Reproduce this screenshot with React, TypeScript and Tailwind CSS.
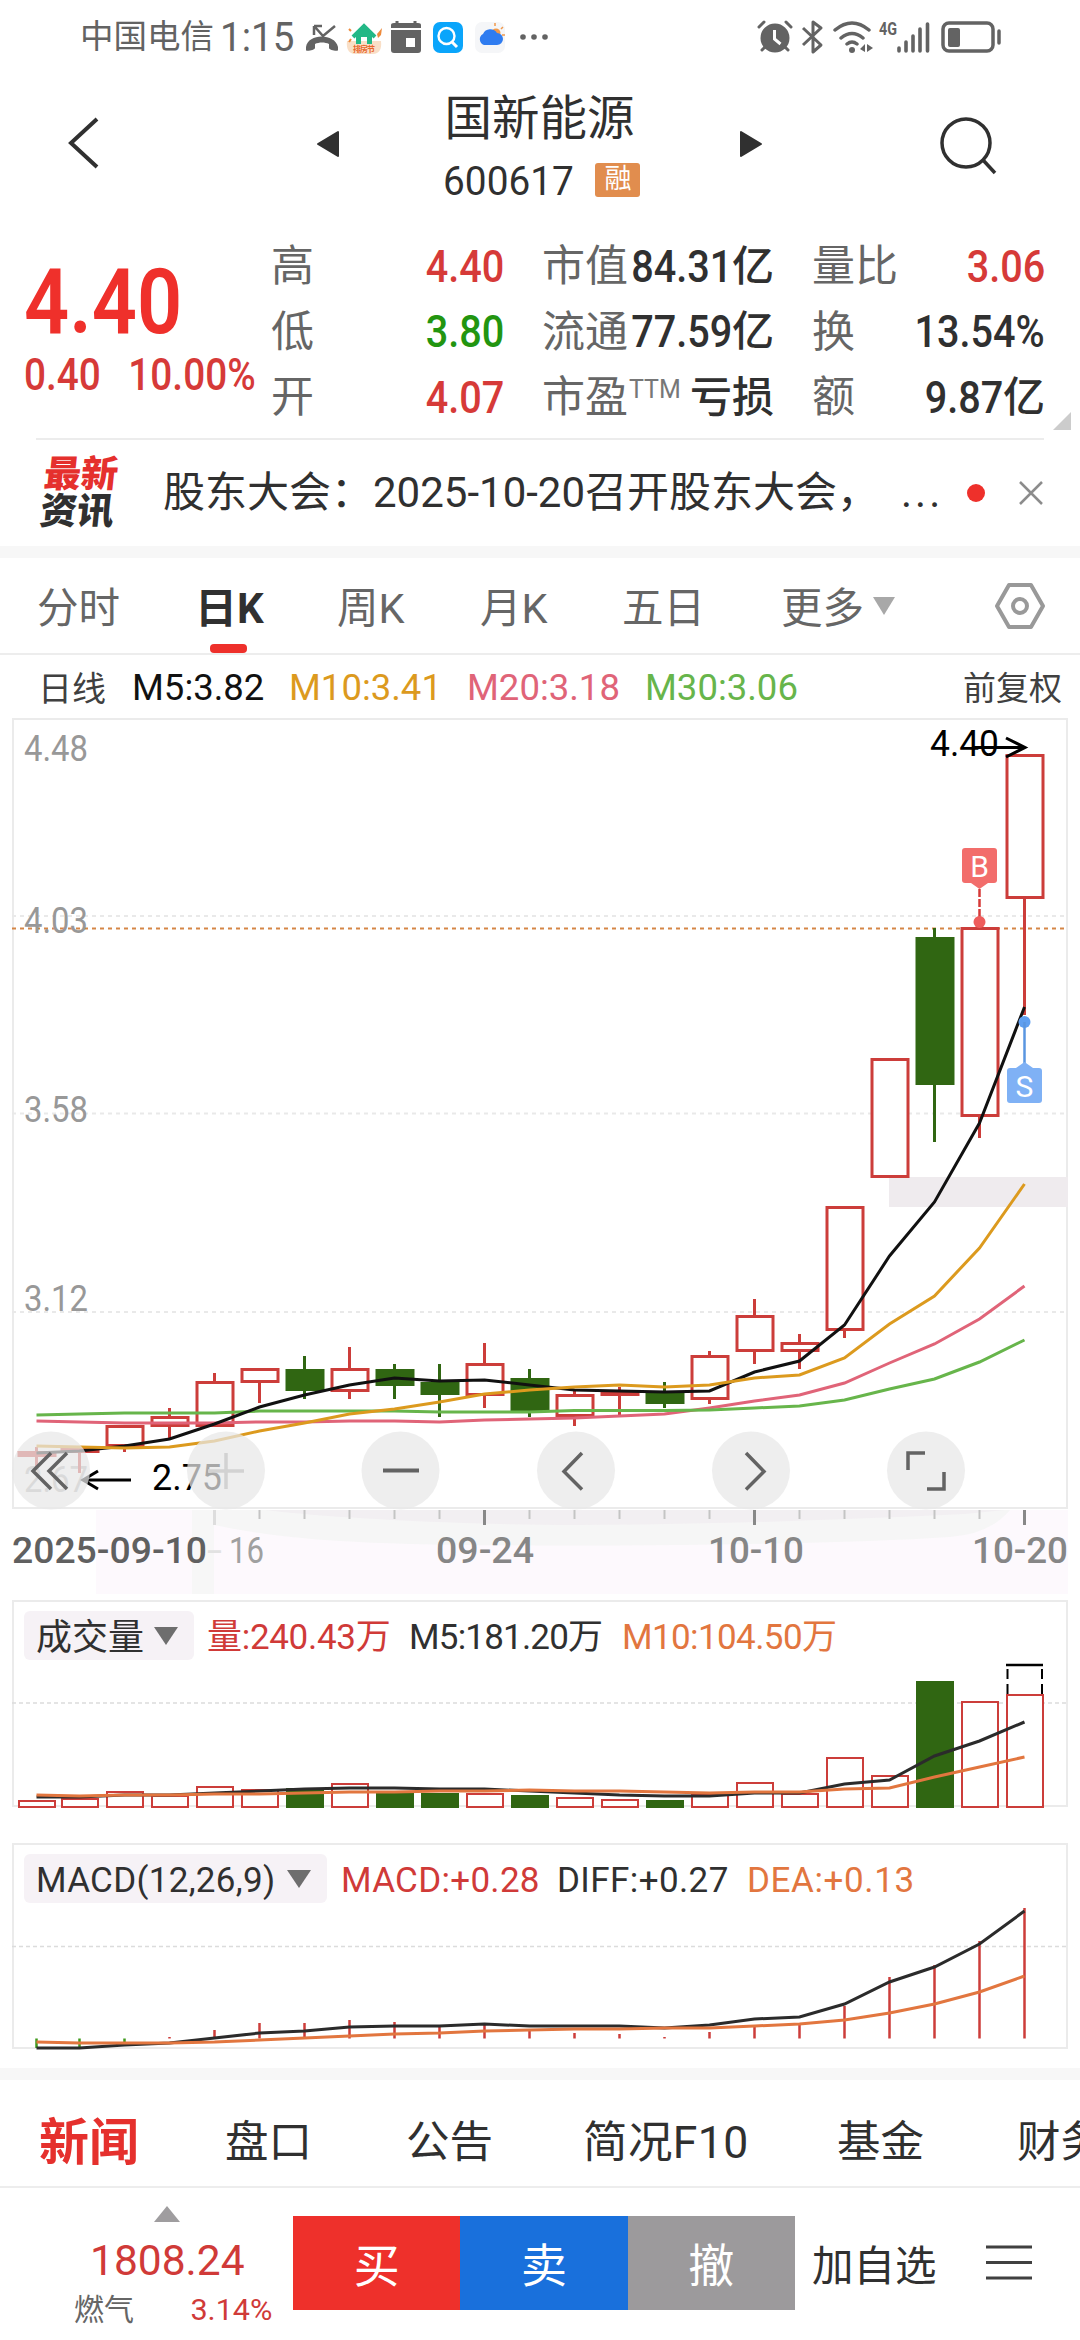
import React from 'react';

const RED = '#cc3d3a';
const GREEN = '#306612';

// [body top, body bottom, high, low, falling]
type Candle = [number, number, number, number, boolean?];

const candles: Candle[] = [
  [1451, 1457, 1447, 1467],
  [1448, 1453, 1447, 1473],
  [1425, 1447, 1425, 1452],
  [1416, 1427, 1408, 1438],
  [1381, 1427, 1373, 1427],
  [1368, 1383, 1368, 1403],
  [1369, 1391, 1356, 1399, true],
  [1368, 1392, 1347, 1399],
  [1369, 1386, 1364, 1399, true],
  [1382, 1395, 1364, 1417, true],
  [1363, 1396, 1343, 1408],
  [1378, 1411, 1369, 1417, true],
  [1394, 1417, 1389, 1426],
  [1392, 1396, 1387, 1415],
  [1393, 1404, 1382, 1408, true],
  [1355, 1400, 1351, 1404],
  [1315, 1352, 1299, 1364],
  [1342, 1352, 1334, 1369],
  [1206, 1331, 1206, 1338],
  [1058, 1178, 1058, 1178],
  [937, 1085, 928, 1142, true],
  [927, 1117, 927, 1138],
  [754, 899, 754, 1015],
];

const averages = [
  { color: '#e06478', data: [1421, 1422, 1423, 1423, 1423, 1422, 1422, 1421, 1421, 1422, 1420, 1419, 1418, 1416, 1414, 1408, 1401, 1395, 1383, 1363, 1344, 1319, 1286] },
  { color: '#67b54b', data: [1415, 1414, 1413, 1413, 1413, 1411, 1411, 1411, 1411, 1412, 1412, 1412, 1410.5, 1410.5, 1410.5, 1410, 1408, 1406, 1400, 1389, 1379, 1362, 1340] },
  { color: '#111111', data: [1453, 1451, 1446, 1439, 1424, 1407, 1395, 1385, 1378, 1381, 1380, 1385, 1390, 1391, 1392, 1391, 1372, 1361, 1325, 1256, 1202, 1123, 1007] },
  { color: '#dc9a1e', data: [1446, 1447, 1448, 1447, 1441, 1431, 1423, 1414, 1409, 1402, 1394, 1390, 1387, 1385, 1387, 1385, 1378, 1375, 1358, 1324, 1296, 1248, 1184] },
];

const volumes = [1800, 1798, 1791, 1795, 1786, 1789, 1788, 1783, 1793, 1793, 1793, 1795, 1797, 1799, 1800, 1794, 1782, 1793, 1757, 1775, 1681, 1701, 1694];
const volumeM5 = [1797, 1797, 1795, 1795, 1793, 1791, 1789, 1788, 1788, 1789, 1789, 1791, 1793, 1795, 1796, 1796, 1793, 1793, 1784, 1780, 1756, 1741, 1722];
const volumeM10 = [1795, 1796, 1795, 1795, 1794, 1794, 1793, 1792, 1792, 1791, 1791, 1790, 1791, 1791, 1792, 1793, 1792, 1792, 1789, 1788, 1777, 1767, 1757];

const macd = [2048, 2048, 2042, 2037, 2030, 2023, 2023, 2020, 2022, 2027, 2025, 2031, 2033, 2034, 2037, 2032, 2027, 2025, 2006, 1977, 1965, 1941, 1908];
const diff = [2048, 2048, 2045, 2043, 2038, 2033, 2031, 2027, 2026, 2026, 2024, 2026, 2026, 2026, 2028, 2025, 2019, 2017, 2004, 1982, 1967, 1944, 1911];
const dea = [2042, 2043, 2043, 2043, 2042, 2040, 2038, 2036, 2034, 2033, 2031, 2030, 2029, 2029, 2028, 2028, 2026, 2024, 2020, 2013, 2004, 1992, 1976];

const xAt = (i: number) => (i === 0 ? 36.5 : 1024.5 - 45 * (22 - i));

const Line = ({ data, color }: { data: number[]; color: string }) => (
  <polyline points={data.map((y, i) => `${xAt(i)},${y}`).join(' ')} fill="none" stroke={color} strokeWidth="3" />
);

type LabelProps = { x: number; y: number; w: number; size?: number; fill?: string; weight?: number; children: string };

const Label = ({ x, y, w, size = 36, fill = '#989898', weight = 400, children }: LabelProps) => (
  <text x={x} y={y} textLength={w} lengthAdjust="spacingAndGlyphs" fontSize={size} fontWeight={weight} fill={fill}>
    {children}
  </text>
);

const StatusBar = () => (
  <div className="flex h-[72px] items-center pt-[2px] pl-[80px] text-[#636363]">
    <span className="w-[140px] whitespace-nowrap text-[33.5px]">中国电信</span>
    <span className="w-[85px] origin-left scale-x-[0.94] whitespace-nowrap text-[41px]">1:15</span>
    <svg width="244" height="44" viewBox="305 14 244 44">
      {/* missed call */}
      <path d="M314 25v9M314 25h8M315 26l8 9 12-10" fill="none" stroke="#636363" strokeWidth="2.500" />
      <path d="M306 46c2-14 29-14 32 0v3c0 2-9 0-9-2v-4c-4-2-10-2-14 0v4c0 2-9 4-9 2z" fill="#636363" />
      {/* housing app */}
      <path d="M347 40h34c1 8-2 13-8 13h-18c-6 0-9-5-8-13z" fill="#f9dfc7" />
      <path d="M353 36l11-11 11 11" fill="none" stroke="#23b886" strokeWidth="4" />
      <path d="M356 34l8-7 8 7v9h-5v-7h-6v7h-5z" fill="#23b886" />
      <text x="353" y="51" fontSize="8" fontWeight="700" fill="#e8672c" textLength="22">排房节</text>
      <path d="M377 33l5-6-1 7-3 3z" fill="#ee8a3b" />
      <path d="M349 28l2 2M349 41l2-3" stroke="#ee8a3b" strokeWidth="2" />
      {/* calendar */}
      <path d="M391 29h30v20q0 3-3 3h-24q-3 0-3-3z" fill="#636363" />
      <path d="M391 27v-3q0-2 3-2h24q3 0 3 2v3z" fill="#636363" />
      <path d="M397 20v4M415 20v4" stroke="#636363" strokeWidth="3" />
      <rect x="406" y="37" width="9" height="9" fill="#fff" />
      {/* search app */}
      <rect x="433" y="21" width="30" height="31" rx="7" fill="#0aa5fb" />
      <circle cx="446.500" cy="35" r="8" fill="none" stroke="#fff" strokeWidth="2.400" />
      <path d="M452 41l5 5" stroke="#fff" strokeWidth="3" />
      {/* weather */}
      <rect x="475" y="21" width="30" height="31" rx="7" fill="#f5f6f8" />
      <circle cx="496" cy="32" r="4.500" fill="#f2994a" />
      <path d="M495 25v-3M501 28l2-2M502 34h3" stroke="#f2994a" strokeWidth="1.500" />
      <path d="M484 44a6 6 0 0 1-1-11 8 8 0 0 1 14-1 6 6 0 0 1 0 12z" fill="#2f7cf0" />
      <circle cx="523" cy="36" r="2.800" fill="#636363" />
      <circle cx="534" cy="36" r="2.800" fill="#636363" />
      <circle cx="545" cy="36" r="2.800" fill="#636363" />
    </svg>
    <span className="flex-1" />
    <svg className="mr-[74px]" width="252" height="44" viewBox="754 14 252 44">
      {/* alarm */}
      <circle cx="775" cy="37" r="14.500" fill="#636363" />
      <path d="M759 26l5-5M791 26l-5-5M762 49l4-4M788 49l-4-4" stroke="#636363" strokeWidth="3" strokeLinecap="round" />
      <path d="M774.500 29v9l6 5" fill="none" stroke="#fff" strokeWidth="3" />
      {/* bluetooth */}
      <path d="M803 27l18 17-8 7V21l8 6-18 17" fill="none" stroke="#636363" strokeWidth="3" strokeLinejoin="round" />
      {/* wifi */}
      <path d="M835 29q17-14 34 0M841 37q11-9 22 0M847 43q5-4 10 0" fill="none" stroke="#636363" strokeWidth="3.500" strokeLinecap="round" />
      <circle cx="852" cy="49" r="3" fill="#636363" />
      <path d="M865 43v8l-5-3zM867 43l6 4-6 4z" fill="#636363" />
      <Label x={879} y={34} w={18} size={19} weight={700} fill="#636363">4G</Label>
      <path d="M899 47v3M906 41v9M913 35v15M920 28v22M927.500 23v27" stroke="#636363" strokeWidth="3.600" strokeLinecap="round" />
      <rect x="943" y="22" width="50" height="28" rx="6" fill="none" stroke="#636363" strokeWidth="3.500" />
      <rect x="948" y="27" width="12" height="19" rx="2" fill="#636363" />
      <path d="M999 30v12" stroke="#636363" strokeWidth="3.500" strokeLinecap="round" />
    </svg>
  </div>
);

const Header = () => (
  <header className="flex h-[156px] items-center text-[#303030]">
    <svg className="mt-[-14px] ml-[66px]" width="36" height="56" viewBox="0 0 36 56">
      <path d="M31 4L5 28l26 24" fill="none" stroke="#303030" strokeWidth="4" />
    </svg>
    <svg className="mt-[-12px] ml-[214px]" width="24" height="30" viewBox="0 0 24 30">
      <path d="M22 3v24L2 15z" fill="#303030" stroke="#303030" strokeLinejoin="round" strokeWidth="2" />
    </svg>
    <div className="mt-[-10px] flex w-[399px] flex-col items-center">
      <h1 className="text-[47.500px] leading-[54px]">国新能源</h1>
      <div className="mt-[19px] flex items-center gap-[22px]">
        <span className="origin-right scale-x-[0.97] text-[40px] leading-[34px]">600617</span>
        <span className="mt-[-4px] flex h-[34px] w-[45px] items-center justify-center rounded-[3px] bg-[#e18d4e] text-[27px] text-white">
          融
        </span>
      </div>
    </div>
    <svg className="mt-[-12px]" width="24" height="30" viewBox="0 0 24 30">
      <path d="M2 3v24l20-12z" fill="#303030" stroke="#303030" strokeLinejoin="round" strokeWidth="2" />
    </svg>
    <svg className="mt-[-8px] ml-[175px]" width="64" height="62" viewBox="0 0 64 62">
      <circle cx="28" cy="28" r="24" fill="none" stroke="#303030" strokeWidth="3.500" />
      <path d="M45 45l12 13" stroke="#303030" strokeWidth="3.500" />
    </svg>
  </header>
);

type Stat = { label: string; value: string; unit?: string; sup?: string; color: string };

const stats: Stat[][] = [
  [
    { label: '高', value: '4.40', color: 'text-[#d63a38]' },
    { label: '低', value: '3.80', color: 'text-[#229510]' },
    { label: '开', value: '4.07', color: 'text-[#d63a38]' },
  ],
  [
    { label: '市值', value: '84.31', unit: '亿', color: 'text-[#303030]' },
    { label: '流通', value: '77.59', unit: '亿', color: 'text-[#303030]' },
    { label: '市盈', sup: 'TTM', value: '', unit: '亏损', color: 'text-[#303030]' },
  ],
  [
    { label: '量比', value: '3.06', color: 'text-[#d63a38]' },
    { label: '换', value: '13.54%', color: 'text-[#303030]' },
    { label: '额', value: '9.87', unit: '亿', color: 'text-[#303030]' },
  ],
];

const StatRow = ({ label, value, unit, sup, color }: Stat) => (
  <div className="flex h-[65.500px] items-center text-[43px] whitespace-nowrap">
    <span className="w-0 text-[#666666]">{label}</span>
    {sup && <sup className="top-[-8px] ml-[87px] text-[25px] leading-none text-[#777777]">{sup}</sup>}
    <span className={`ml-auto flex items-center font-medium ${color}`}>
      <span className="origin-right scale-x-[0.9] text-[44px]">{value}</span>
      <span className="text-[42px]">{unit}</span>
    </span>
  </div>
);

const Quote = () => (
  <section className="relative flex h-[210px] pl-[24px]">
    <div className="w-[247px] pt-[36px] text-[#d63a38]">
      <div className="origin-left scale-x-[0.88] text-[90px] leading-[78px] font-semibold text-[#ef302b]">4.40</div>
      <div className="mt-[12px] flex origin-left scale-x-[0.89] gap-[31px] text-[43.500px] leading-[44px] font-medium whitespace-nowrap">
        <span>0.40</span>
        <span>10.00%</span>
      </div>
    </div>
    <div className="grid grid-cols-[233px_232px_233px] gap-x-[38px] pt-[6px]">
      {stats.map((col, i) => (
        <div key={i}>
          {col.map((s) => (
            <StatRow key={s.label} {...s} />
          ))}
        </div>
      ))}
    </div>
    <svg className="absolute right-[9px] bottom-[8px]" width="18" height="18">
      <path d="M18 0v18H0z" fill="#cccccc" />
    </svg>
  </section>
);

const NewsTicker = () => (
  <section className="mx-[36px] flex h-[108px] items-center border-t-2 border-[#ececec] text-[#303030]">
    <div className="ml-[6px] flex w-[121px] -skew-x-6 flex-col text-[37px] leading-[37px] font-black">
      <span className="text-[#e5302d]">最新</span>
      <span>资讯</span>
    </div>
    <span className="w-[738px] text-[42px] whitespace-nowrap">股东大会：2025-10-20召开股东大会，</span>
    <span className="w-[66px] text-[42px] tracking-[3px]">...</span>
    <span className="h-[18px] w-[18px] shrink-0 rounded-full bg-[#ee302b]" />
    <svg className="ml-auto" width="26" height="26" viewBox="0 0 26 26">
      <path d="M2 2l22 22M24 2L2 24" stroke="#8c8c8c" strokeWidth="2.500" />
    </svg>
  </section>
);

const periods = [
  { name: '分时', width: 'w-[158px]' },
  { name: '日K', width: 'w-[142px]' },
  { name: '周K', width: 'w-[143px]' },
  { name: '月K', width: 'w-[142px]' },
  { name: '五日', width: 'w-[159px]' },
  { name: '更多', width: 'w-[91px]' },
];

const PeriodTabs = () => (
  <nav className="flex h-[97px] items-center border-b-2 border-[#ededed] pl-[37px] text-[41.500px] text-[#666666]">
    {periods.map((p) => (
      <div key={p.name} className={`relative flex h-full items-center pt-[6px] whitespace-nowrap ${p.width}`}>
        <span className={p.name === '日K' ? 'text-[42px] font-bold text-[#303030]' : ''}>{p.name}</span>
        {p.name === '日K' && <span className="absolute bottom-0 left-[15px] h-[9px] w-[37px] rounded-[4px] bg-[#ee302b]" />}
      </div>
    ))}
    <svg width="24" height="20" viewBox="0 0 24 20">
      <path d="M1 1h22L12 19z" fill="#a8a8a8" />
    </svg>
    <svg className="ml-[98px]" width="52" height="50" viewBox="0 0 52 50">
      <path d="M15 4h22l12 21-12 21H15L3 25z" fill="none" stroke="#999999" strokeWidth="4" strokeLinejoin="round" />
      <circle cx="26" cy="25" r="7" fill="none" stroke="#999999" strokeWidth="4" />
    </svg>
  </nav>
);

const AverageRow = () => (
  <div className="flex h-[63px] items-center pt-[4px] pl-[38px] text-[36.500px] whitespace-nowrap">
    <span className="w-[94px] text-[34px] text-[#404040]">日线</span>
    <span className="w-[157px] text-[#111111]">M5:3.82</span>
    <span className="w-[178px] text-[#dc9a1e]">M10:3.41</span>
    <span className="w-[178px] text-[#e06478]">M20:3.18</span>
    <span className="text-[#67b54b]">M30:3.06</span>
    <span className="mr-[18px] ml-auto text-[33px] text-[#404040]">前复权</span>
  </div>
);

const CHART_BUTTONS = [51, 226, 400.5, 576, 751, 926];

const CandleChart = () => (
  <svg className="block" width="1080" height="882" viewBox="0 718 1080 882">
    <rect x="13" y="719" width="1054" height="789" fill="none" stroke="#ebebeb" strokeWidth="2" />
    <rect x="96" y="1510" width="972" height="84" fill="#fdf9fd" />
    <rect x="192" y="1510" width="22" height="84" fill="#f7f7f7" />
    <path d="M214 1510h796q-20 24-60 27-90 6-270 8-250 2-340-4-70-4-126-16z" fill="#f6f6f6" />
    <path d="M265 1510h740l-40 4q-300 14-465 10-150-4-235-14z" fill="#f2eff2" />
    <path d="M12 916H1068M12 1113.500H1068M12 1312H1068" stroke="#e9e9e9" strokeWidth="2" strokeDasharray="4 4" />
    <rect x="889" y="1177" width="179" height="30" fill="#efebee" />
    <path d="M12 928.500H1068" stroke="#d58646" strokeWidth="2" strokeDasharray="4 4" />

    <Label x={24} y={761} w={64}>4.48</Label>
    <Label x={24} y={933} w={64}>4.03</Label>
    <Label x={24} y={1122} w={64}>3.58</Label>
    <Label x={24} y={1311} w={64}>3.12</Label>
    <Label x={24} y={1492} w={64} fill="#b8b8b8">2.67</Label>

    {candles.map(([top, bottom, high, low, falling], i) => {
      const x = xAt(i);
      const color = falling ? GREEN : RED;
      return (
        <g key={i} stroke={color} strokeWidth="3">
          <path d={`M${x} ${high}V${top}M${x} ${bottom}V${low}`} />
          <rect x={x - 17.5} y={top + 1.5} width="36" height={Math.max(bottom - top - 3, 1)} fill={falling ? GREEN : '#ffffff'} />
        </g>
      );
    })}
    {averages.map((a) => (
      <Line key={a.color} {...a} />
    ))}

    {/* highest / lowest price markers */}
    <Label x={930} y={756} w={69} size={37} fill="#000000">4.40</Label>
    <path d="M972 747.500h52M1006 738l19 9.500-19 9.500" fill="none" stroke="#000" strokeWidth="3" />
    <Label x={152} y={1490} w={70} size={37} fill="#000000">2.75</Label>
    <path d="M131 1480H84M98 1471l-15 9 15 9" fill="none" stroke="#000" strokeWidth="3" />

    {/* buy / sell flags */}
    <rect x="962" y="848" width="35" height="35" rx="3" fill="#f26d6b" />
    <path d="M971 883h17l-8.500 6z" fill="#f26d6b" />
    <path d="M979.500 889v30" stroke="#d63a38" strokeWidth="2.500" strokeDasharray="8 2" />
    <circle cx="979.500" cy="922" r="6" fill="#ee5c5b" />
    <text x="979.500" y="877" fontSize="30" fill="#fff" textAnchor="middle">B</text>
    <circle cx="1024.500" cy="1022" r="6" fill="#5f9ff0" />
    <path d="M1024.500 1022v42" stroke="#5a96e0" strokeWidth="2.500" />
    <path d="M1016 1068h17l-8.500-6z" fill="#7fb1f5" />
    <rect x="1007" y="1068" width="35" height="35" rx="3" fill="#7fb1f5" />
    <text x="1024.500" y="1097" fontSize="30" fill="#fff" textAnchor="middle">S</text>

    {CHART_BUTTONS.map((cx) => (
      <circle key={cx} cx={cx} cy="1470.500" r="39" fill="#e8e8e8" fillOpacity="0.72" />
    ))}
    <g fill="none" stroke="#636363" strokeWidth="3.500">
      <path d="M51 1453l-18 18 18 18M67 1453l-18 18 18 18" />
      <path d="M226 1453v36M208 1471h36" stroke="#d2d2d2" />
      <path d="M383 1470.500h36" strokeWidth="4" />
      <path d="M582 1453l-18 18.500 18 18" />
      <path d="M746 1453l18 18.500-18 18" />
      <path d="M908 1470v-17h17M944 1472v17h-17" />
    </g>

    {candles.map((_, i) => {
      if (i < 4) return null;
      const major = (i - 4) % 6 === 0;
      return (
        <path
          key={i}
          d={`M${xAt(i)} 1510v${major ? 15 : 9}`}
          stroke={i === 4 ? '#dddddd' : major ? '#888888' : '#c4c4c4'}
          strokeWidth={major ? 3 : 2}
        />
      );
    })}
    <Label x={12} y={1563} w={195} weight={500} fill="#606060">2025-09-10</Label>
    <Label x={207} y={1563} w={15} fill="#e2e2e2">-</Label>
    <Label x={229} y={1563} w={35} fill="#a0a0a0">16</Label>
    <Label x={436} y={1563} w={98} weight={500} fill="#868686">09-24</Label>
    <Label x={708} y={1563} w={96} weight={500} fill="#868686">10-10</Label>
    <Label x={972} y={1563} w={96} weight={500} fill="#868686">10-20</Label>
  </svg>
);

const Caret = () => (
  <svg className="mt-[-3px]" width="26" height="18" viewBox="0 0 26 18">
    <path d="M1 0h24L13 18z" fill="#6e6e6e" />
  </svg>
);

const IndicatorHeader = ({ children }: { children: React.ReactNode }) => (
  <div className="absolute top-[11px] left-[24px] flex h-[49px] items-center text-[35px] whitespace-nowrap text-[#303030]">
    {children}
  </div>
);

const VolumeChart = () => (
  <section className="relative h-[243px]">
    <svg className="block" width="1080" height="243" viewBox="0 1600 1080 243">
      <rect x="13" y="1601" width="1054" height="205" fill="none" stroke="#ebebeb" strokeWidth="2" />
      <path d="M12 1703H1068" stroke="#dcdcdc" strokeWidth="1.500" strokeDasharray="4 3" />
      {volumes.map((top, i) => {
        const falling = candles[i][4];
        return (
          <rect
            key={i}
            x={xAt(i) - 17.5}
            y={top + 1}
            width="36"
            height={1806 - top}
            fill={falling ? GREEN : '#ffffff'}
            stroke={falling ? GREEN : RED}
            strokeWidth="2"
          />
        );
      })}
      <path d="M1007.500 1694v-29M1042 1694v-29" stroke="#000" strokeWidth="2" strokeDasharray="10 5" />
      <path d="M1006 1665h37" stroke="#000" strokeWidth="2.500" />
      <Line data={volumeM5} color="#2b2b2b" />
      <Line data={volumeM10} color="#e2763f" />
    </svg>
    <IndicatorHeader>
      <span className="flex h-full w-[170px] items-center gap-[9px] rounded-[6px] bg-[#f6f2f6] pt-[4px] pl-[12px] text-[36px]">
        成交量 <Caret />
      </span>
      <span className="ml-[13px] w-[202px] pt-[4px] tracking-[-0.3px] text-[#d03a38]">量:240.43万</span>
      <span className="w-[213px] pt-[4px] tracking-[-0.8px]">M5:181.20万</span>
      <span className="pt-[4px] tracking-[-0.6px] text-[#e2763f]">M10:104.50万</span>
    </IndicatorHeader>
  </section>
);

const MacdChart = () => (
  <section className="relative h-[225px]">
    <svg className="block" width="1080" height="225" viewBox="0 1843 1080 225">
      <rect x="13" y="1844" width="1054" height="204" fill="none" stroke="#ebebeb" strokeWidth="2" />
      <path d="M12 1946.500H1068" stroke="#dcdcdc" strokeWidth="1.500" strokeDasharray="4 3" />
      {macd.map((y, i) => (
        <path key={i} d={`M${xAt(i)} 2038.5V${y}`} stroke={i < 3 ? '#3f9a1c' : RED} strokeWidth="2.500" />
      ))}
      <Line data={diff} color="#2b2b2b" />
      <Line data={dea} color="#e2763f" />
    </svg>
    <IndicatorHeader>
      <span className="flex h-full w-[303px] items-center gap-[11px] rounded-[6px] bg-[#f6f2f6] pt-[4px] pl-[12px] tracking-[0.3px]">
        MACD(12,26,9) <Caret />
      </span>
      <span className="ml-[14px] w-[216px] pt-[4px] tracking-[0.3px] text-[#d03a38]">MACD:+0.28</span>
      <span className="w-[190px] pt-[4px] tracking-[0.4px]">DIFF:+0.27</span>
      <span className="pt-[4px] tracking-[0.6px] text-[#e2763f]">DEA:+0.13</span>
    </IndicatorHeader>
  </section>
);

const NewsTabs = () => (
  <nav className="flex h-[108px] items-center overflow-hidden border-b-2 border-[#ededed] pt-[20px] pl-[39px] text-[43.500px] whitespace-nowrap text-[#303030]">
    <span className="w-[186px] shrink-0 text-[50px] font-bold text-[#e5302d]">新闻</span>
    <span className="w-[181px] shrink-0">盘口</span>
    <span className="w-[177px] shrink-0">公告</span>
    <span className="w-[254px] shrink-0 text-[44.500px] tracking-[0.4px]">简况F10</span>
    <span className="w-[180px] shrink-0">基金</span>
    <span className="shrink-0">财务</span>
  </nav>
);

const BottomBar = () => (
  <footer className="flex h-[152px] text-[#303030]">
    <div className="flex w-[293px] flex-col pt-[18px] text-[#d03a38]">
      <svg className="ml-[153px]" width="28" height="16" viewBox="0 0 28 16">
        <path d="M14 0l13 16H1z" fill="#9f9d9f" />
      </svg>
      <span className="mt-[16px] ml-[90px] text-[42.500px] leading-[46px]">1808.24</span>
      <div className="mt-[9px] ml-[74px] flex w-[198px] justify-between text-[30px] leading-[34px]">
        <span className="text-[#666666]">燃气</span>
        <span className="origin-right scale-x-[1.02]">3.14%</span>
      </div>
    </div>
    <div className="mt-[28px] grid h-[94px] w-[502px] grid-cols-3 text-[46px] text-white">
      <button className="bg-[#ee302b] pt-[6px]">买</button>
      <button className="bg-[#1970dc] pt-[6px]">卖</button>
      <button className="bg-[#9c9a9c] pt-[6px]">撤</button>
    </div>
    <span className="mt-[58px] ml-[17px] w-[174px] text-[41.500px]">加自选</span>
    <svg className="mt-[55px]" width="46" height="38" viewBox="0 0 46 38">
      <path d="M0 4h46M0 19.500h46M0 35h46" stroke="#404040" strokeWidth="3" />
    </svg>
  </footer>
);

export default function App() {
  return (
    <main className="h-[2340px] w-[1080px] overflow-hidden bg-white font-['Roboto','Noto_Sans_CJK_SC',sans-serif] leading-none">
      <StatusBar />
      <Header />
      <Quote />
      <NewsTicker />
      <div className="h-[12px] bg-[#f7f7f7]" />
      <PeriodTabs />
      <AverageRow />
      <CandleChart />
      <VolumeChart />
      <MacdChart />
      <div className="h-[12px] bg-[#f7f7f7]" />
      <NewsTabs />
      <BottomBar />
    </main>
  );
}
